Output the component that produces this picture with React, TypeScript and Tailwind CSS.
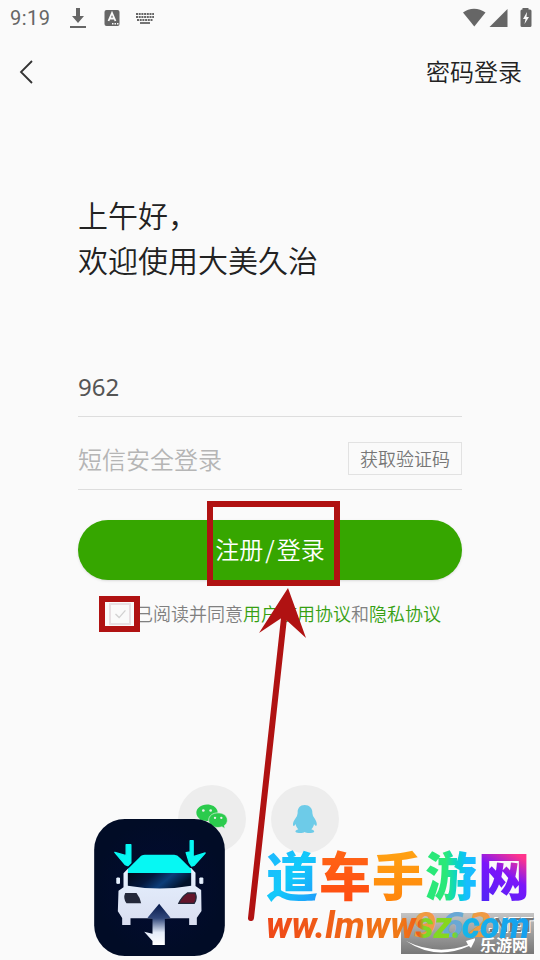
import React from "react";

function StatusBar() {
  return (
    <div className="flex h-9 items-center justify-between pl-[10px] pr-2 text-[#666666]">
      <div className="flex items-center">
        <span className="w-[60px] font-[Roboto,sans-serif] text-xl leading-9 tracking-wide">9:19</span>
        <svg className="h-5 w-4" viewBox="0 0 16 20" fill="currentColor">
          <path d="M6 0h4v8h4l-6 7-6-7h4zM0 18h16v2H0z" />
        </svg>
        <svg className="ml-[18px] h-4 w-4" viewBox="0 0 16 16">
          <rect x="0.5" width="15" height="16" rx="2" fill="currentColor" />
          <path d="M4.500 11 8 3l3.500 8M5.800 8.500h4.400" fill="none" stroke="#fafafa" strokeWidth="1.800" />
          <path d="M8 13h1.500v1.500H8zM10.500 13H12v1.500h-1.500zM13 13h1.500v1.500H13z" fill="#fafafa" />
        </svg>
        <svg className="ml-[15px] h-3 w-5" viewBox="0 0 20 12" stroke="currentColor" fill="none">
          <path d="M1 2h18M1 5h18M2 8h16" strokeWidth="2" strokeDasharray="2 0.700" />
          <path d="M5 11h10" strokeWidth="1.800" />
        </svg>
      </div>
      <svg className="h-5 w-[69px]" viewBox="0 0 69 20" fill="currentColor">
        <path d="M0 4.500C6-.6 16-.6 22.500 4.500L11.300 18.500z" />
        <path d="M44.500 1v18H26.500z" />
        <path d="M59.500 1.500V0h6v1.500H67A1.500 1.500 0 0 1 68.500 3v14.500A1.500 1.500 0 0 1 67 19h-8a1.500 1.500 0 0 1-1.500-1.500V3A1.500 1.500 0 0 1 59 1.500z" />
        <path d="M64 4l-4 7h2.500L61.500 16l4.500-7h-2.500z" fill="#fafafa" />
      </svg>
    </div>
  );
}

function WechatIcon() {
  return (
    <svg className="-mt-1 h-[26px] w-8" viewBox="0 0 96 75">
      <path d="M33 0C15 0 1 11 1 25c0 9 5 15 12 20l-3 9 12-6c8 2 17 2 24-1C66 41 66 25 64 18 60 7 48 0 33 0z" fill="#2bcb4d" />
      <path d="M66 25c-16 0-28 9-28 22s12 22 28 22c4 0 8-1 12-2l9 6-2-10c6-4 9-9 9-16 0-13-12-22-28-22z" fill="#2bcb4d" stroke="#ededed" strokeWidth="2" />
      <g fill="#ededed"><circle cx="22" cy="18" r="4" /><circle cx="44" cy="18" r="4" /><circle cx="57" cy="40" r="3.500" /><circle cx="76" cy="40" r="3.500" /></g>
    </svg>
  );
}

function PenguinIcon() {
  return (
    <svg className="h-7 w-6" viewBox="0 0 72 84" fill="#6dcbe8">
      <path d="M35 0C20 0 13 11 14 24l-2 9C6 42-1 51 0 60c1 6 5 2 8-3 1 7 4 12 8 16-7 2-10 5-8 8 4 4 23 4 27 0 5 4 24 4 28 0 2-3-2-6-8-8 4-4 7-9 8-16 3 5 7 8 8 3 2-9-5-18-11-27l-2-9C59 11 50 0 35 0z" />
    </svg>
  );
}

function CarBadge() {
  return (
    <svg className="absolute bottom-1 left-[94px] h-[137px] w-[131px]" viewBox="43 132 392 411" role="img" aria-label="car">
      <defs>
        <radialGradient id="night"><stop offset="0" stopColor="#020b32" /><stop offset="1" stopColor="#010c26" /></radialGradient>
        <linearGradient id="glass" x2="1" y2=".3"><stop offset="0" stopColor="#020818" /><stop offset=".4" stopColor="#03173c" /><stop offset=".68" stopColor="#0b3d79" /><stop offset="1" stopColor="#02122b" /></linearGradient>
        <linearGradient id="shaft" x2="0" y2="1"><stop offset="0" stopColor="#061849" /><stop offset=".35" stopColor="#31477a" /><stop offset=".7" stopColor="#e5edfa" /><stop offset="1" stopColor="#fff" /></linearGradient>
        <linearGradient id="body" x2="0" y2="1"><stop offset="0" stopColor="#e6f1ff" /><stop offset="1" stopColor="#d9def0" /></linearGradient>
      </defs>
      <rect x="43" y="132" width="392" height="411" rx="92" fill="url(#night)" />
      <path d="M144 281l-13 14v42l-15 10-2 62 13 20v21h25v-20h176v20h23v-22l14-20-1-63-17-12v-40l-13-14z" fill="url(#body)" />
      <path d="M144 294v-12l34-34q6-9 17-9h88q10 0 17 9l34 34v12z" fill="#06f8f3" />
      <path d="M144 294h190v38q-94 17-190 0z" fill="url(#glass)" />
      <path d="M136 354h34q11 14 14 31h-44q-11-15-4-31z" fill="#23283a" />
      <path d="M346 354h-23q-18 12-26 31h46q10-14 3-31z" fill="#63152b" stroke="#23283a" strokeWidth="4" />
      <path d="M119 309h-8v16h8zM360 309h9v16h-9z" fill="#e6f1ff" stroke="#e6f1ff" strokeWidth="3" strokeLinejoin="round" />
      <path d="M238 386l-35 42 15 3v45l-25-6 25 28v12h37v-79l17-3z" fill="url(#shaft)" />
      <path d="M139 209h14v54l-9 9-8-3-31-37 34 10zM331 197h9v48l36-11-33 37-8 2-7-11-9-29 12-2z" fill="#06f8f3" stroke="#06f8f3" strokeWidth="4" strokeLinejoin="round" />
    </svg>
  );
}

function SwooshStamp() {
  return (
    <div className="absolute bottom-[6px] right-[6px] h-[41px] w-[133px] bg-linear-to-b from-[#c4c4c4] to-[#777777] font-['Noto_Sans_CJK_SC',sans-serif] font-bold">
      <span className="absolute -top-1 left-3 flex gap-1 font-['DejaVu_Sans',sans-serif] text-[34px] leading-8 italic">
        <span className="text-[#f09a43]">9</span><span className="text-[#69a8d5]">6</span><span className="text-[#f09a43]">2</span>
      </span>
      <span className="absolute right-0 top-0 font-['Liberation_Sans',sans-serif] text-xl leading-6 text-[#777777] [text-shadow:1px_1px_0_#fff,-1px_-1px_0_#fff]">.NET</span>
      <svg className="absolute left-1 top-6 h-4 w-[70px]" viewBox="0 0 70 16" fill="#ffffff">
        <path d="M1 4q30 15 62 4l-2-4 10-3-5 10-2-2Q31 24 1 4z" />
      </svg>
      <span className="absolute bottom-0 right-[6px] text-base leading-5 text-white">乐游网</span>
    </div>
  );
}

function SiteMark() {
  return (
    <div className="absolute bottom-3 right-[10px] w-[264px] font-['Noto_Sans_CJK_SC',sans-serif] font-black">
      <div className="flex justify-between text-[52px] leading-[60px]">
        <span className="bg-linear-to-br from-[#20b4ff] via-[#12c9fa] to-[#2198fa] bg-clip-text text-transparent">道</span>
        <span className="bg-linear-to-b from-[#ff6817] to-[#ff4a10] bg-clip-text text-transparent">车</span>
        <span className="bg-linear-to-b from-[#ffa514] to-[#ff830b] bg-clip-text text-transparent">手</span>
        <span className="bg-linear-to-r from-[#2ae878] from-40% to-[#18bdff] to-80% bg-clip-text text-transparent">游</span>
        <span className="bg-[linear-gradient(210deg,#ff348c_20%,#7b16fa_50%,#4b27f5)] bg-clip-text text-transparent">网</span>
      </div>
      <div className="whitespace-nowrap font-[Roboto,sans-serif] text-4xl leading-[44px] font-extrabold italic">
        <span className="bg-[linear-gradient(90deg,#ef4718_0%,#f07a16_50%,#f05b18_57%,#7bd928_59%,#8ad51a_70%,#17b6e8_73%,#159df0_100%)] bg-clip-text pr-1 text-transparent">ww.lmwwsz.com</span>
      </div>
    </div>
  );
}

export default function App() {
  return (
    <div className="relative flex min-h-screen flex-col overflow-hidden bg-[#fafafa] font-['Noto_Sans','Noto_Sans_CJK_SC',sans-serif] text-[#222222]">
      <StatusBar />
      <header className="flex h-[72px] items-center justify-between pl-4 pr-[18px]">
        <button type="button" aria-label="返回" className="flex h-8 w-6 items-center">
          <svg className="h-6 w-5" viewBox="0 0 20 24" fill="none" stroke="#333333" strokeWidth="1.800"><path d="M16 1 5 12l11 11" /></svg>
        </button>
        <button type="button" className="pb-[2px] font-['Noto_Sans_CJK_SC',sans-serif] text-2xl leading-8 font-[350]">密码登录</button>
      </header>

      <main className="flex flex-col px-[78px] pt-[84px]">
        <h1 className="font-['Noto_Sans_CJK_SC',sans-serif] text-3xl leading-[45px] font-[350]">上午好，<br />欢迎使用大美久治</h1>
        <form className="mt-[75px] flex flex-col" onSubmit={(e) => e.preventDefault()}>
          <div className="flex h-[60px] items-center border-b border-[#dddddd]">
            <input aria-label="手机号" defaultValue="962" className="w-full bg-transparent text-2xl leading-8 text-[#555555] outline-none" />
          </div>
          <div className="flex h-[73px] items-center justify-between border-b border-[#dddddd] pt-[11px]">
            <input aria-label="验证码" placeholder="短信安全登录" className="min-w-0 flex-1 bg-transparent font-['Noto_Sans_CJK_SC',sans-serif] text-2xl leading-8 font-[350] outline-none placeholder:text-[#b5b5b5]" />
            <button type="button" className="h-[33px] w-[114px] shrink-0 border border-[#e2e2e2] pb-[2px] font-['Noto_Sans_CJK_SC',sans-serif] text-lg leading-6 font-[350] text-[#777777]">获取验证码</button>
          </div>
          <button type="submit" className="relative mt-[30px] h-[60px] rounded-full bg-[#36a600] pb-[2px] font-['Noto_Sans_CJK_SC',sans-serif] text-2xl leading-8 font-[350] text-white shadow-sm">
            注册<span className="px-[2px]">/</span>登录
            <span className="absolute -top-[19px] left-1/2 ml-[-63px] h-[85px] w-[133px] border-6 border-[#b01212]" />
          </button>
          <div className="mt-4 flex h-[36px] items-center pl-[21px] font-['Noto_Sans_CJK_SC',sans-serif] text-lg leading-6 font-[350] text-[#808080]">
            <label className="flex items-center whitespace-nowrap">
              <span className="z-10 flex h-9 w-[41px] shrink-0 items-center justify-center border-6 border-[#b01212] bg-[#fafafa]">
                <input type="checkbox" className="peer sr-only" />
                <svg className="h-[22px] w-[22px] border-2 border-[#e8e0e3]" viewBox="0 0 20 20" fill="none" stroke="#d2d2d2" strokeWidth="1.500"><path d="m5 10 4 4 7-8" /></svg>
              </span>
              <span className="-ml-[5px] pb-[2px]">已阅读并同意</span>
            </label>
            <a href="#terms" className="pb-[2px] whitespace-nowrap text-[#36a012]">用户使用协议</a>
            <span className="pb-[2px]">和</span>
            <a href="#privacy" className="pb-[2px] whitespace-nowrap text-[#36a012]">隐私协议</a>
          </div>
        </form>
        <div className="mt-[153px] flex justify-center gap-[25px] pr-[23px]">
          <button type="button" aria-label="微信登录" className="flex size-[68px] items-center justify-center rounded-full bg-[#ededed]"><WechatIcon /></button>
          <button type="button" aria-label="QQ登录" className="flex size-[68px] items-center justify-center rounded-full bg-[#ededed]"><PenguinIcon /></button>
        </div>
      </main>

      <svg className="pointer-events-none absolute left-1/2 top-[587px] ml-[-24px] h-[334px] w-[64px]" viewBox="246 587 64 334" aria-hidden="true">
        <path d="M284 618 251 918" stroke="#b01212" strokeWidth="6" strokeLinecap="round" />
        <path d="M288 588 259 633 283 617 306 638z" fill="#b01212" />
      </svg>
      <CarBadge />
      <SwooshStamp />
      <SiteMark />
    </div>
  );
}
